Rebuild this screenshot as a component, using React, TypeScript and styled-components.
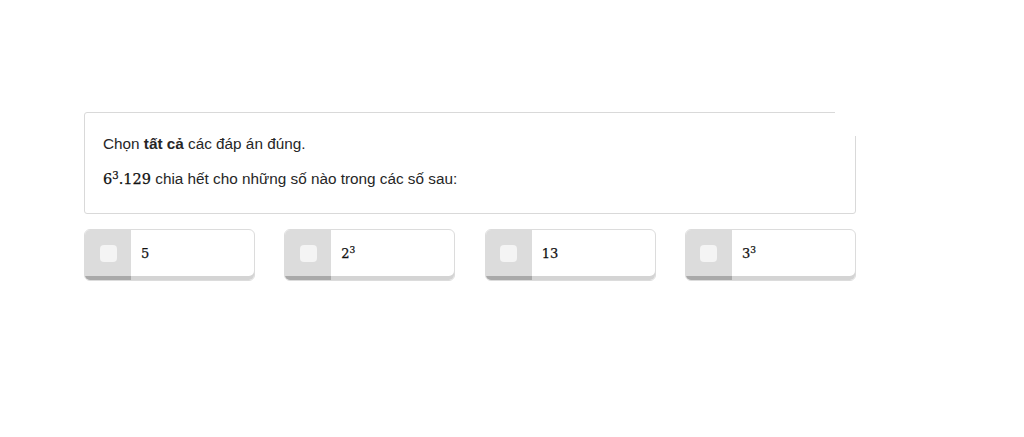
import styled, { createGlobalStyle } from 'styled-components'

const options = [
  { base: '5' },
  { base: '2', exp: '3' },
  { base: '13' },
  { base: '3', exp: '3' },
]

export default function App() {
  return (
    <>
      <Global />
      <Page>
        <Question>
          <Line>
            Chọn <b>tất cả</b> các đáp án đúng.
          </Line>
          <Line>
            <Math>
              6<sup>3</sup>.129
            </Math>{' '}
            chia hết cho những số nào trong các số sau:
          </Line>
        </Question>
        <Options>
          {options.map((o, i) => (
            <Option key={i}>
              <CheckArea>
                <Box />
              </CheckArea>
              <Label>
                <Math $small>
                  {o.base}
                  {o.exp && <sup>{o.exp}</sup>}
                </Math>
              </Label>
            </Option>
          ))}
        </Options>
      </Page>
    </>
  )
}

const Global = createGlobalStyle`
  body {
    margin: 0;
    background: #fff;
    font-family: "Liberation Sans", Arial, sans-serif;
    color: #222;
  }
  * {
    box-sizing: border-box;
  }
`

const Page = styled.div`
  width: 856px;
  padding: 112px 0 0 84px;
  display: flex;
  flex-direction: column;
  gap: 15px;
`

const Question = styled.div`
  position: relative;
  height: 102px;
  border: 1px solid #d9d9d9;
  border-radius: 3px;
  padding: 21px 18px 0;
  display: flex;
  flex-direction: column;
  gap: 15px;

  &::after {
    content: '';
    position: absolute;
    top: -2px;
    right: -2px;
    width: 22px;
    height: 25px;
    background: #fff;
  }
`

const Line = styled.div`
  font-size: 15.3px;
  line-height: 20px;
  color: #262626;

  b {
    font-weight: 700;
  }
`

const Math = styled.span<{ $small?: boolean }>`
  font-family: "DejaVu Serif", "Liberation Serif", serif;
  font-size: ${({ $small }) => ($small ? '13px' : '14.5px')};
  color: #111;
  -webkit-text-stroke: 0.25px #111;

  sup {
    font-size: 0.7em;
    vertical-align: 0.5em;
    line-height: 0;
  }
`

const Options = styled.div`
  display: grid;
  grid-template-columns: repeat(4, 171px);
  justify-content: space-between;
`

const Option = styled.div`
  height: 52px;
  display: flex;
  border: 1px solid #dcdcdc;
  border-radius: 6px;
  overflow: hidden;
  box-shadow: inset 0 -4px 0 #d4d4d4;
  background: #fff;
`

const CheckArea = styled.div`
  width: 46px;
  background: #dcdcdc;
  box-shadow: inset 0 -4px 0 #a9a9a9;
  display: flex;
  align-items: center;
  justify-content: center;
  padding-bottom: 4px;
`

const Box = styled.div`
  width: 17px;
  height: 17px;
  border-radius: 4px;
  background: #f4f4f4;
`

const Label = styled.div`
  display: flex;
  align-items: center;
  padding: 0 0 4px 10px;
`
